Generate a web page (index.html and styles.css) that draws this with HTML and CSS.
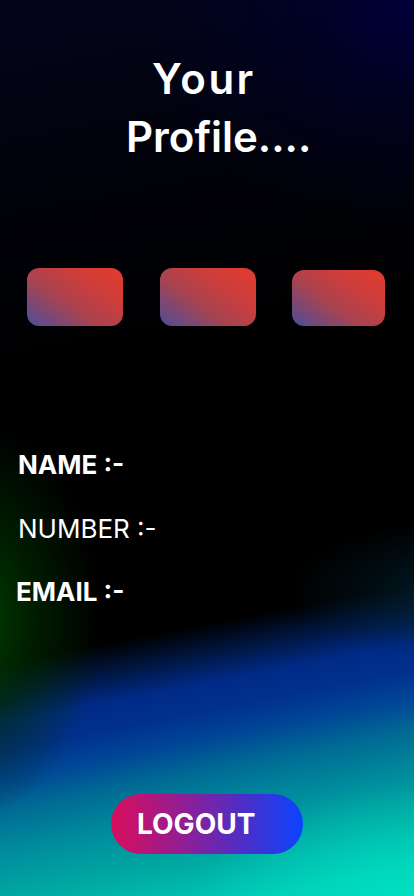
FILE: index.html
```html
<!DOCTYPE html>
<html>
<head>
<meta charset="utf-8">
<link rel="stylesheet" href="styles.css">
</head>
<body>
<main class="screen">
  <h1 class="title"><span class="t1">Your</span><span class="t2">Profile....</span></h1>
  <div class="tiles">
    <div class="tile"></div>
    <div class="tile"></div>
    <div class="tile tile-small"></div>
  </div>
  <div class="fields">
    <p class="field bold name">NAME :-</p>
    <p class="field light number">NUMBER :-</p>
    <p class="field bold email">EMAIL :-</p>
  </div>
  <div class="actions">
    <button class="logout">LOGOUT</button>
  </div>
</main>
</body>
</html>
```

FILE: styles.css
```css
html, body {
  margin: 0;
  padding: 0;
}
body {
  width: 414px;
  height: 896px;
  overflow: hidden;
  font-family: Inter, "Open Sans", sans-serif;
  color: #fff;
}
.screen {
  width: 414px;
  height: 896px;
  display: flex;
  flex-direction: column;
  box-sizing: border-box;
  background:
    radial-gradient(ellipse 300px 240px at 430px -10px, rgba(0,0,64,1), rgba(0,0,45,0.6) 45%, rgba(0,0,0,0) 100%),
    radial-gradient(ellipse 130px 200px at -30px 620px, rgba(0,66,0,1), rgba(0,48,0,0.6) 50%, rgba(0,0,0,0) 100%),
    radial-gradient(ellipse 180px 70px at 470px 590px, rgba(0,36,50,0.8), rgba(0,0,0,0) 100%),
    radial-gradient(ellipse 240px 130px at 430px 910px, rgba(0,228,196,0.85), rgba(0,0,0,0) 100%),
    linear-gradient(169deg, #03041a 0%, #010209 22%, #000000 40%, #000000 68%, #011640 71%, #002a85 74%, #00318f 77%, #004896 80%, #006a94 83%, #008a9c 87%, #00a8a2 92%, #00c8b4 97%, #00d4bc 100%);
}
.title {
  margin: 50px 0 0 0;
  font-weight: 600;
  font-size: 42px;
  line-height: 58px;
  display: flex;
  flex-direction: column;
  align-items: flex-start;
}
.t1 { padding-left: 152px; letter-spacing: 2.5px; }
.t2 { padding-left: 126px; }
.tiles {
  display: flex;
  align-items: flex-start;
  margin-top: 102px;
  padding-left: 27px;
  gap: 37px;
}
.tile {
  width: 96px;
  height: 58px;
  border-radius: 12px;
  background: linear-gradient(215deg, #e23b2e 0%, #cf3d3a 30%, #a84350 60%, #4b4e99 100%);
}
.tile-small {
  width: 93px;
  height: 56px;
  margin-top: 2px;
  margin-left: -1px;
}
.fields {
  display: flex;
  flex-direction: column;
  margin-top: 122px;
  padding-left: 18px;
}
.field {
  margin: 0;
  font-size: 26px;
  line-height: 34px;
}
.bold { font-weight: 700; }
.light { font-weight: 400; }
.number { margin-top: 30px; }
.email { margin-top: 29px; margin-left: -2px; }
.actions {
  margin-top: auto;
  margin-bottom: 42px;
  padding-left: 111px;
}
.logout {
  width: 192px;
  height: 60px;
  border: none;
  border-radius: 30px;
  background: linear-gradient(90deg, #d90e5c 0%, #8c1f98 40%, #4a2fc9 70%, #0a44ff 100%);
  color: #fff;
  font-family: Inter, "Open Sans", sans-serif;
  font-weight: 700;
  font-size: 28px;
  text-align: left;
  padding: 0 0 0 26px;
  line-height: 60px;
}
```
